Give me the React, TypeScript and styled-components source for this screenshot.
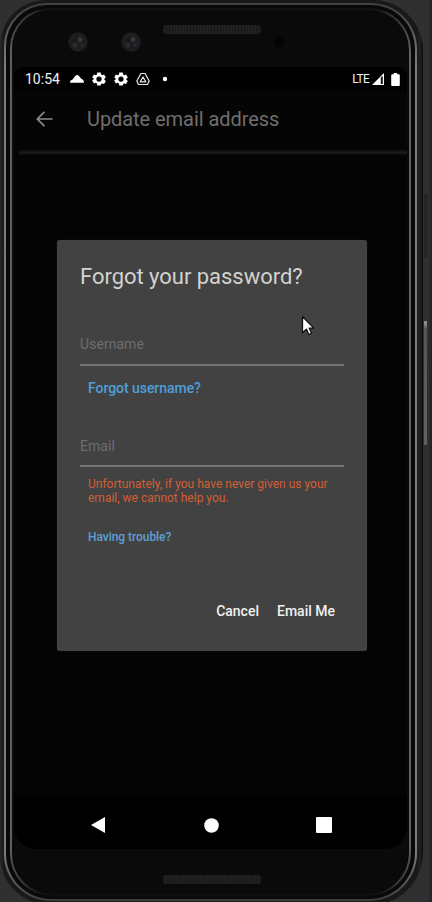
import React from "react";
import styled, { createGlobalStyle, css } from "styled-components";

const GlobalStyle = createGlobalStyle`
  * { box-sizing: border-box; }
  body { margin: 0; background: #2d2d2d; font-family: Roboto, sans-serif; overflow: hidden; }
  button { font: inherit; border: 0; padding: 0; margin: 0; background: none; cursor: pointer; text-align: left; }
`;

const Stage = styled.main`
  position: relative;
  width: 432px;
  height: 902px;
  overflow: hidden;
  background: linear-gradient(90deg, #303030 0 429px, #20262a 430px);
`;

const OuterCase = styled.div`
  width: 423px;
  height: 905px;
  padding: 3px 6px 4px 4px;
  border-radius: 46px 50px 52px 50px;
  background: linear-gradient(90deg, #262626 0, #191919 4px, #191919 417px, #222 420px, #0b0b0b 423px);
`;

const MetalRim = styled.div`
  height: 100%;
  padding: 2px;
  border-radius: 43px 46px 48px 47px;
  background: linear-gradient(#404040 0, #484848 12px, #7c7c7c 60px, #7c7c7c 850px, #505050 885px, #3c3c3c);
`;

const Channel = styled.div`
  height: 100%;
  padding: 3px 4px;
  border-radius: 41px 44px 46px 45px;
  background: #090909;
`;

const InnerRim = styled.div`
  height: 100%;
  padding: 2px;
  border-radius: 40px 42px 43px 42px;
  background: linear-gradient(#0b0b0b 0, #303030 6px, #606060 45px, #606060 840px, #383838 875px, #0b0b0b);
`;

const Face = styled.div`
  display: flex;
  flex-direction: column;
  height: 100%;
  border-radius: 38px 40px 41px 40px;
  background: #0a0a0a;
`;

const TopBezel = styled.div`
  position: relative;
  flex: 0 0 57px;
`;

const Grille = styled.div`
  width: 98px;
  height: 9px;
  border-radius: 3px;
  background: repeating-linear-gradient(90deg, #191919 0 1px, #202020 1px 3px);
`;

const Earpiece = styled(Grille)`
  margin: 15px 0 0 151px;
`;

const Lens = styled.div<{ $x: number }>`
  position: absolute;
  left: ${(p) => p.$x}px;
  top: 22px;
  width: 20px;
  height: 20px;
  border-radius: 50%;
  background:
    radial-gradient(circle at 60% 38%, #46494c 0, transparent 3.5px),
    radial-gradient(circle at 36% 65%, #323538 0, transparent 3.5px),
    radial-gradient(circle at 70% 66%, #2e3033 0, transparent 3px),
    radial-gradient(circle, #17191b 0 25%, #1d1f21 60%, #111213 72%);
`;

const Sensor = styled.div`
  position: absolute;
  left: 260px;
  top: 25px;
  width: 14px;
  height: 14px;
  border-radius: 50%;
  background: radial-gradient(circle, #030303 30%, #0a0a0a 70%);
`;

const Screen = styled.section`
  display: flex;
  flex-direction: column;
  flex: 0 0 782px;
  margin: 0 2px;
  overflow: hidden;
  border-radius: 10px 10px 22px 22px;
  background: #050404;
`;

const StatusBar = styled.header`
  display: flex;
  align-items: center;
  justify-content: space-between;
  height: 24px;
  padding: 0 7px 0 11px;
  background: #010101;
  color: #f1f1f1;
`;

const StatusGroup = styled.div<{ $gap: number }>`
  display: flex;
  align-items: center;
  gap: ${(p) => p.$gap}px;
`;

const Clock = styled.span`
  width: 37px;
  font-size: 14px;
  white-space: nowrap;
`;

const Network = styled.span`
  font-size: 12px;
  letter-spacing: -0.7px;
`;

const AppBar = styled.div`
  display: flex;
  align-items: center;
  gap: 34px;
  height: 59px;
  padding: 0 0 3px 22px;
  background: #060505;
`;

const AppTitle = styled.h1`
  margin: 0;
  color: #706e6c;
  font-size: 20px;
  font-weight: 400;
  letter-spacing: -0.06px;
`;

const Rule = styled.div`
  flex: 0 0 5px;
  margin-left: 5px;
  background: linear-gradient(#0c0b0b, #1c1b1b, #0c0b0b);
`;

const Content = styled.div`
  flex: 1;
  padding: 85px 0 0 43px;
`;

const Dialog = styled.section`
  display: flex;
  flex-direction: column;
  width: 310px;
  height: 411px;
  padding: 22px 23px 0 23px;
  border-radius: 3px;
  background: #424242;
  box-shadow: 0 0 1px #333;
`;

const DialogTitle = styled.h2`
  margin: 0;
  color: #d2d2d0;
  font-size: 22px;
  line-height: 30px;
  font-weight: 400;
  letter-spacing: -0.03px;
`;

const Field = styled.div<{ $gap: number; $height: number }>`
  height: ${(p) => p.$height}px;
  margin-top: ${(p) => p.$gap}px;
  border-bottom: 2px solid #747474;
  color: #6e6e6e;
  font-size: 14px;
  line-height: 18px;
  letter-spacing: 0.05px;
`;

const smallText = css`
  margin-left: 8px;
  font-size: 12px;
  line-height: 14px;
`;

const ForgotLink = styled.button`
  margin: 12px 0 0 8px;
  color: #4e9fdb;
  font-size: 14px;
  line-height: 20px;
  font-weight: 500;
  letter-spacing: -0.05px;
`;

const Warning = styled.p`
  ${smallText}
  margin-top: 10px;
  margin-bottom: 0;
  color: #d35f35;
  white-space: nowrap;
`;

const HelpLink = styled.button`
  ${smallText}
  margin-top: 25px;
  color: #5e9fd5;
  font-weight: 500;
  letter-spacing: -0.05px;
`;

const Actions = styled.div`
  display: flex;
  justify-content: flex-end;
  gap: 18px;
  margin-top: 57px;
  padding-right: 9px;
`;

const Action = styled.button`
  color: #f0f0f0;
  font-size: 14px;
  line-height: 20px;
  font-weight: 500;
`;

const NavBar = styled.nav`
  display: flex;
  align-items: center;
  justify-content: space-between;
  height: 53px;
  padding: 5px 75px 0 77px;
  background: #000;
`;

const BottomGrille = styled(Grille)`
  margin: 26px 0 0 151px;
`;

const SideButton = styled.div<{ $top: number; $height: number; $lit?: boolean }>`
  position: absolute;
  left: 424px;
  top: ${(p) => p.$top}px;
  width: ${(p) => (p.$lit ? 3 : 4)}px;
  height: ${(p) => p.$height}px;
  border-radius: 1px;
  background: ${(p) => (p.$lit ? "linear-gradient(#999 0, #777 5px, #555 8px, #626262)" : "#252525")};
`;

const Pointer = styled.svg`
  position: absolute;
  left: 301px;
  top: 315px;
`;

const Gear = () => (
  <svg width="14" height="14" viewBox="0 0 24 24" fill="#fff">
    <path
      fillRule="evenodd"
      d="M9 1h6l.6 3.3 2 1.1 3.1-1.1 3 5.1-2.5 2.2v1.8l2.5 2.2-3 5.1-3.1-1.1-2 1.1L15 23H9l-.6-3.3-2-1.1-3.1 1.1-3-5.1 2.5-2.2v-1.8L.3 9.4l3-5.1 3.1 1.1 2-1.1zM12 7.5a4.5 4.5 0 1 0 0 9 4.5 4.5 0 0 0 0-9z"
    />
  </svg>
);

export default function App() {
  return (
    <Stage>
      <GlobalStyle />
      <OuterCase>
        <MetalRim>
          <Channel>
            <InnerRim>
              <Face>
                <TopBezel>
                  <Earpiece />
                  <Lens $x={56} />
                  <Lens $x={109} />
                  <Sensor />
                </TopBezel>
                <Screen>
                  <StatusBar>
                    <StatusGroup $gap={8}>
                      <Clock>10:54</Clock>
                      <svg width="14" height="10" viewBox="0 0 14 10" fill="#fff">
                        <path d="M0 8.800C0 7 1 5.800 2.600 5.500L5 2.200Q7 0 9 2l2 2.600q3 1.200 3 4.200z" />
                      </svg>
                      <Gear />
                      <Gear />
                      <svg width="14" height="14" viewBox="0 0 14 14" fill="none" stroke="#e8e8e8" strokeWidth="1.2" strokeLinejoin="round">
                        <path d="M5 1.500h4L13.200 9l-1.700 3.500h-9L.8 9z" />
                        <path d="M7 5l2.800 4.800H4.200z" />
                      </svg>
                      <svg width="14" height="14" viewBox="0 0 14 14" fill="#fff">
                        <circle cx="7" cy="7" r="2.200" />
                      </svg>
                    </StatusGroup>
                    <StatusGroup $gap={3}>
                      <Network>LTE</Network>
                      <svg width="16" height="12" viewBox="0 0 16 12">
                        <path d="M0 12 12 0v12z" fill="#fff" />
                        <path d="M8.800 4.600V11h2V3z" fill="#111" />
                      </svg>
                      <svg width="9" height="13" viewBox="0 0 9 13" fill="#fff">
                        <path d="M2.800 0h3.400v1.300h1.600q1 0 1 1V12q0 1-1 1H1.200q-1 0-1-1V2.300q0-1 1-1h1.600z" />
                      </svg>
                    </StatusGroup>
                  </StatusBar>
                  <AppBar>
                    <svg width="17" height="16" viewBox="0 0 17 16" fill="none" stroke="#8c8c8c" strokeWidth="1.700">
                      <path d="M16.500 8H2M8.400 .9 1.300 8l7.100 7.100" />
                    </svg>
                    <AppTitle>Update email address</AppTitle>
                  </AppBar>
                  <Rule />
                  <Content>
                    <Dialog role="dialog">
                      <DialogTitle>Forgot your password?</DialogTitle>
                      <Field $gap={43} $height={31}>Username</Field>
                      <ForgotLink>Forgot username?</ForgotLink>
                      <Field $gap={39} $height={30}>Email</Field>
                      <Warning>
                        Unfortunately, if you have never given us your
                        <br />
                        email, we cannot help you.
                      </Warning>
                      <HelpLink>Having trouble?</HelpLink>
                      <Actions>
                        <Action>Cancel</Action>
                        <Action>Email Me</Action>
                      </Actions>
                    </Dialog>
                  </Content>
                  <NavBar>
                    <svg width="15" height="16" viewBox="0 0 15 16" fill="#fff">
                      <path d="M14 0v16L0 8z" />
                    </svg>
                    <svg width="15" height="15" viewBox="0 0 15 15" fill="#fff">
                      <circle cx="7.500" cy="7.500" r="7.300" />
                    </svg>
                    <svg width="16" height="16" viewBox="0 0 16 16" fill="#fff">
                      <rect width="16" height="16" rx="1" />
                    </svg>
                  </NavBar>
                </Screen>
                <BottomGrille />
              </Face>
            </InnerRim>
          </Channel>
        </MetalRim>
      </OuterCase>
      <SideButton $top={194} $height={64} />
      <SideButton $top={321} $height={124} $lit />
      <Pointer width="14" height="22" viewBox="0 0 14 22">
        <path d="M1.500 1.500v16.300l3.900-3.700 2.400 5.400 2.700-1.200-2.400-5.200h4.600z" fill="#fff" stroke="#111" strokeWidth="1.300" strokeLinejoin="round" />
      </Pointer>
    </Stage>
  );
}
